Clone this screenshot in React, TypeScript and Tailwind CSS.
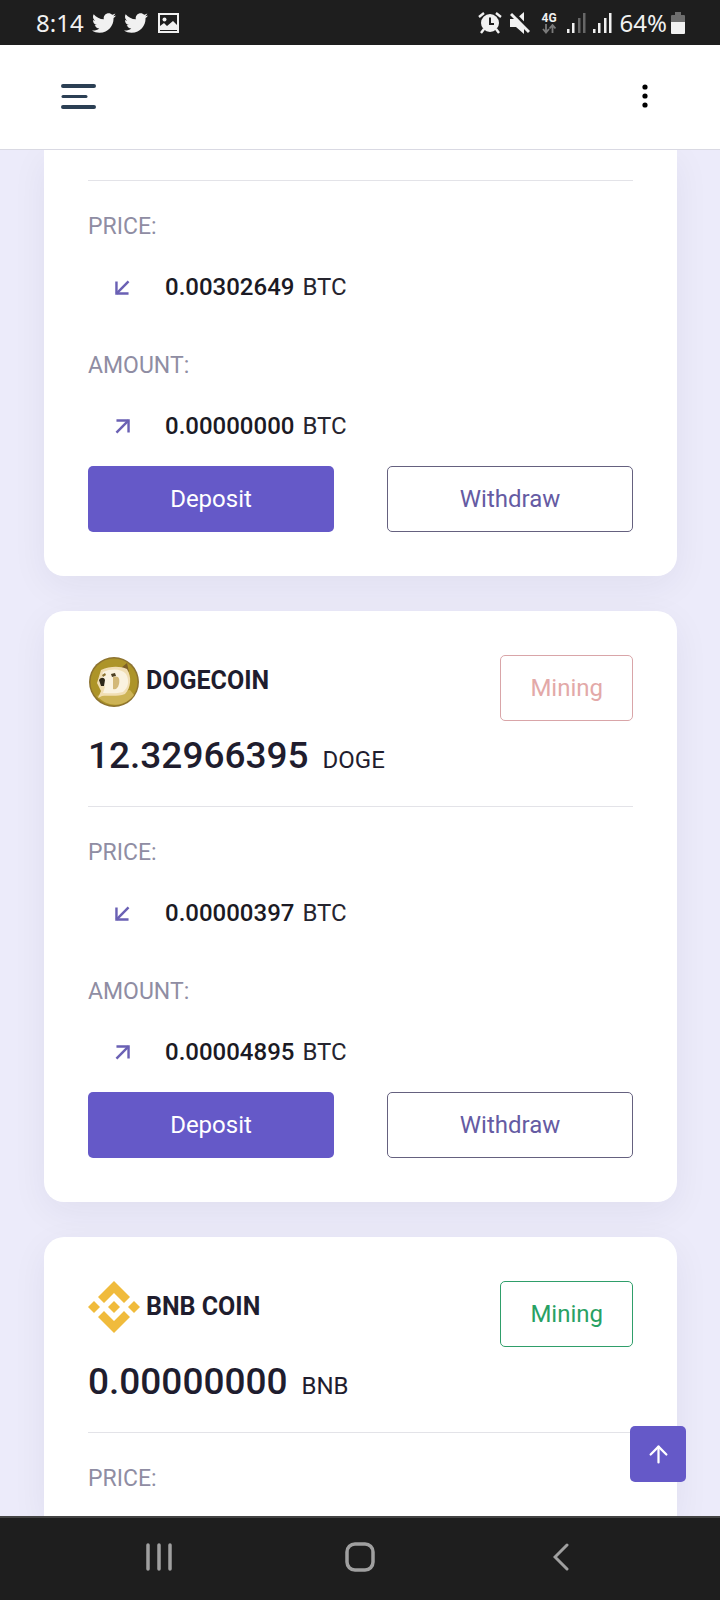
import React from 'react';
import { ArrowDownLeft, ArrowUp, ArrowUpRight } from 'lucide-react';
import { FaTwitter } from 'react-icons/fa';

type Wallet = {
  id: string;
  symbol: string;
  name?: string;
  balance?: string;
  logo?: React.ReactNode;
  mining?: 'on' | 'off';
  price?: string;
  amount?: string;
};

const DogeLogo = () => (
  <svg viewBox="0 0 52 52" className="size-[52px]" aria-hidden="true">
    <circle cx="26" cy="27" r="25" fill="#8d7330" />
    <circle cx="26" cy="27" r="23.5" fill="#ad9428" />
    <path d="M9 41 C16 37 28 37 42 35 L46 40 C39 50 22 55 9 41 Z" fill="#cdb356" />
    <path d="M33 13 L39 8 L41 17 Z" fill="#7d5f26" />
    <path d="M13 15 C22 11 32 11 39 14 C44 22 43 33 37 39 C29 42 20 40 14 41 L10 43 L13 36 L9 28 Z" fill="#f1deb4" />
    <path d="M15 17 C24 13 34 14 38 19 C42 26 40 33 35 37 C28 39 21 38 15 38 L17 32 L13 26 Z" fill="#faf2e0" />
    <path d="M11 25 C13 22 16 22 17 25 L16 31 L13 31 Z" fill="#2e2718" />
    <path d="M23 19 L27 18 L28 21 L24 22 Z" fill="#4d4024" />
    <path d="M25 22 C31 20 32 24 31 29 C30 33 28 35 25 34 Z" fill="#d3b878" />
    <path d="M14 20 L17 18 L18 20 L15 22 Z" fill="#8d7330" />
  </svg>
);

const BnbLogo = () => (
  <svg viewBox="0 0 52 52" className="size-[52px]" fill="#f0bb3c" aria-hidden="true">
    <path d="M26 0 L42 16 L36 22 L26 12 L16 22 L10 16 Z" />
    <path d="M26 52 L42 36 L36 30 L26 40 L16 30 L10 36 Z" />
    <path d="M26 20 L32 26 L26 32 L20 26 Z" />
    <path d="M6 20 L12 26 L6 32 L0 26 Z" />
    <path d="M46 20 L52 26 L46 32 L40 26 Z" />
  </svg>
);

const wallets: Wallet[] = [
  { id: 'btc', symbol: 'BTC', price: '0.00302649', amount: '0.00000000' },
  { id: 'doge', symbol: 'DOGE', name: 'DOGECOIN', balance: '12.32966395', logo: <DogeLogo />, mining: 'off', price: '0.00000397', amount: '0.00004895' },
  { id: 'bnb', symbol: 'BNB', name: 'BNB COIN', balance: '0.00000000', logo: <BnbLogo />, mining: 'on' },
];

function Signal({ weak }: { weak?: boolean }) {
  return (
    <svg viewBox="0 0 19 20" className="h-5 w-[19px]" fill="#f1f1f1" aria-hidden="true">
      <rect x="0" y="16" width="2.5" height="4" />
      <rect x="5" y="10" width="2.5" height="10" />
      <rect x="11" y="5" width="2.5" height="15" opacity={weak ? 0.35 : 1} />
      <rect x="16" y="0" width="2.5" height="20" opacity={weak ? 0.35 : 1} />
    </svg>
  );
}

function StatusBar() {
  return (
    <div className="flex h-[45px] shrink-0 items-center justify-between bg-[#1e1e1e] pr-[35px] pl-9 font-['Noto_Sans',sans-serif] text-2xl text-[#f1f1f1]">
      <div className="flex items-center gap-2">
        <span>8:14</span>
        <FaTwitter className="size-6" />
        <FaTwitter className="size-6" />
        <svg viewBox="0 0 21 20" className="ml-[2px] h-5 w-[21px]" aria-hidden="true">
          <rect x="1" y="1" width="19" height="18" fill="none" stroke="#f1f1f1" strokeWidth="2" />
          <path d="M2 17 V13 L6 10 L9 13 L15 8 L19 12 V17 Z" fill="#f1f1f1" />
          <circle cx="6.500" cy="6.500" r="2" fill="#f1f1f1" />
        </svg>
      </div>
      <div className="flex items-center">
        <svg viewBox="0 0 24 22" className="mr-2 h-[22px] w-6" fill="none" stroke="#f1f1f1" aria-hidden="true">
          <circle cx="12" cy="11" r="9" fill="#f1f1f1" stroke="none" />
          <path d="M1 5 L6 1 M23 5 L18 1" strokeWidth="2.4" />
          <path d="M6 17 L3 21 M18 17 L21 21" strokeWidth="2.4" />
          <path d="M12 5.500 V12 H16" stroke="#1e1e1e" strokeWidth="2" />
        </svg>
        <svg viewBox="0 0 20 22" className="mr-3 h-[22px] w-5" aria-hidden="true">
          <path d="M0 7 H6 L14 0 V22 L6 15 H0 Z" fill="#f1f1f1" />
          <path d="M3 0 L21 19" stroke="#1e1e1e" strokeWidth="3" />
          <path d="M1 2 L19 20" stroke="#f1f1f1" strokeWidth="3" />
        </svg>
        <div className="mr-[10px] flex flex-col items-center">
          <span className="font-[Roboto,sans-serif] text-xs leading-3 font-bold">4G</span>
          <svg viewBox="0 0 14 10" className="h-[10px] w-[14px]" fill="none" stroke="#7b7b7b" strokeWidth="1.800" aria-hidden="true">
            <path d="M4 0 V8 M1 5 L4 8.500 L7 5" />
            <path d="M10.500 9 V1 M7.500 4.500 L10.500 1 L13.500 4.500" />
          </svg>
        </div>
        <div className="mr-2 flex gap-[7px]">
          <Signal weak />
          <Signal />
        </div>
        <span className="mr-1">64%</span>
        <svg viewBox="0 0 14 22" className="h-[22px] w-[14px]" aria-hidden="true">
          <path d="M4 0 H10 V3 H13 Q14 3 14 4 V11 H0 V4 Q0 3 1 3 H4 Z" fill="#6d6d6d" />
          <path d="M0 10 H14 V21 Q14 22 13 22 H1 Q0 22 0 21 Z" fill="#f1f1f1" />
        </svg>
      </div>
    </div>
  );
}

function Header() {
  return (
    <header className="flex h-[105px] shrink-0 items-center justify-between border-b border-[#d9d9e3] bg-white px-[61px] pb-[2px]">
      <button type="button" aria-label="Open menu">
        <svg viewBox="0 0 35 25" className="h-[25px] w-[35px]" fill="none" stroke="#2b3f54" strokeLinecap="round">
          <path d="M2 2 H33 M2 23 H33" strokeWidth="4" />
          <path d="M2 12.500 H25" strokeWidth="3" />
        </svg>
      </button>
      <button type="button" aria-label="More options" className="flex w-7 justify-center">
        <svg viewBox="0 0 6 24" className="h-6 w-[6px]" fill="#000">
          <circle cx="3" cy="3" r="2.600" />
          <circle cx="3" cy="12" r="2.600" />
          <circle cx="3" cy="21" r="2.600" />
        </svg>
      </button>
    </header>
  );
}

function Row({ label, value, out }: { label: string; value?: string; out?: boolean }) {
  const Icon = out ? ArrowUpRight : ArrowDownLeft;
  return (
    <div>
      <div className="text-[23px] leading-8 text-[#8f8da3]">{label}</div>
      {value && (
        <div className="mt-7 flex items-center text-2xl leading-8">
          <span className="mr-2 flex w-[69px] justify-center text-[#6a60b4]">
            <Icon size={29} strokeWidth={2} strokeLinecap="butt" strokeLinejoin="miter" />
          </span>
          <span className="mr-2 font-medium text-[#1b1a24]">{value}</span>
          <span className="text-[#26252f]">BTC</span>
        </div>
      )}
    </div>
  );
}

function WalletCard({ wallet }: { wallet: Wallet }) {
  const shape = !wallet.name ? 'rounded-b-[20px] pt-[30px] pb-11' : wallet.price ? 'rounded-[20px] py-11' : 'flex-1 rounded-t-[20px] pt-11';

  return (
    <section className={`bg-white px-11 shadow-[0_10px_36px_rgba(30,30,60,0.06)] ${shape}`}>
      {wallet.name && (
        <div className="mb-[30px]">
          <div className="flex items-start justify-between">
            <div className="flex items-center gap-[6px]">
              {wallet.logo}
              <h2 className="text-[25px] leading-8 font-bold text-[#1f1d2e]">{wallet.name}</h2>
            </div>
            <button type="button" className={`h-[66px] rounded-[5px] border px-[29px] text-2xl ${wallet.mining === 'on' ? 'border-[#2f9e6a] text-[#28a164]' : 'border-[#d9a5a8] text-[#e3a9a8]'}`}>
              Mining
            </button>
          </div>
          <div className="mt-[15px] flex items-baseline gap-[14px] text-[#1f1d2e]">
            <span className="text-[37px] leading-10 font-medium">{wallet.balance}</span>
            <span className="text-2xl leading-8">{wallet.symbol}</span>
          </div>
        </div>
      )}
      <div className="space-y-[47px] border-t border-[#e3e3e8] pt-[30px]">
        <Row label="PRICE:" value={wallet.price} />
        {wallet.amount && <Row label="AMOUNT:" value={wallet.amount} out />}
      </div>
      {wallet.amount && (
        <div className="mt-6 grid grid-cols-2 gap-[53px]">
          <button type="button" className="h-[66px] rounded-[5px] bg-[#6559c8] text-2xl text-white">Deposit</button>
          <button type="button" className="h-[66px] rounded-[5px] border border-[#65617f] text-2xl text-[#655ba3]">Withdraw</button>
        </div>
      )}
    </section>
  );
}

function NavBar() {
  return (
    <nav className="grid h-[84px] shrink-0 grid-cols-3 items-center border-t-2 border-[#444] bg-[#1e1e1e] px-[58px] pb-1 text-[#a0a0a0]">
      <button type="button" aria-label="Recent apps" className="flex justify-center">
        <svg viewBox="0 0 26 28" className="h-7 w-[26px]" stroke="currentColor" strokeWidth="3.500" strokeLinecap="round">
          <path d="M2 2 V26 M13 2 V26 M24 2 V26" />
        </svg>
      </button>
      <button type="button" aria-label="Home" className="flex justify-center">
        <svg viewBox="0 0 30 30" className="size-[30px]" fill="none" stroke="currentColor" strokeWidth="3.500">
          <rect x="2" y="2" width="26" height="26" rx="8" />
        </svg>
      </button>
      <button type="button" aria-label="Back" className="flex justify-center">
        <svg viewBox="0 0 16 28" className="h-7 w-4" fill="none" stroke="currentColor" strokeWidth="3" strokeLinecap="round">
          <path d="M14 2 L2 14 L14 26" />
        </svg>
      </button>
    </nav>
  );
}

export default function App() {
  return (
    <div className="flex h-screen flex-col bg-[#ecebfa] font-[Roboto,sans-serif]">
      <StatusBar />
      <Header />
      <div className="relative min-h-0 flex-1">
        <main className="flex h-full flex-col gap-[35px] overflow-hidden pr-[43px] pl-11">
          {wallets.map((w) => (
            <WalletCard key={w.id} wallet={w} />
          ))}
        </main>
        <button type="button" aria-label="Back to top" className="absolute right-[34px] bottom-[34px] flex size-14 items-center justify-center rounded-[5px] bg-[#6559c8] text-white">
          <ArrowUp size={27} strokeWidth={2} />
        </button>
      </div>
      <NavBar />
    </div>
  );
}
